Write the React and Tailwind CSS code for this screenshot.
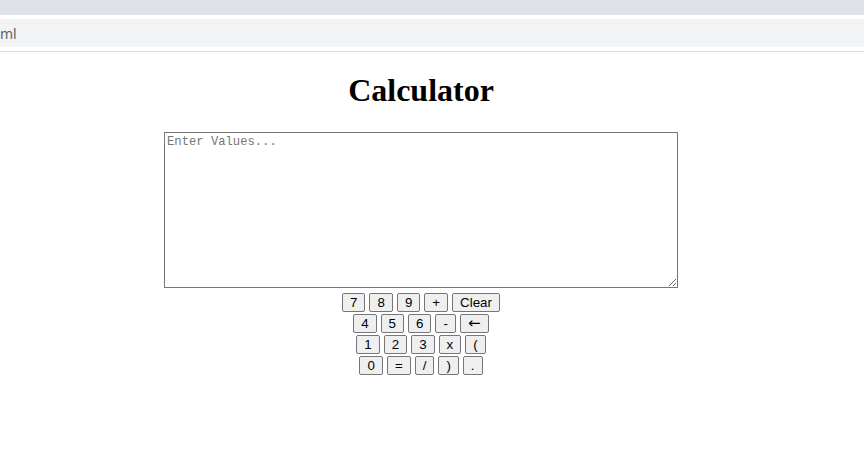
const rows = [
  ['7', '8', '9', '+', 'Clear'],
  ['4', '5', '6', '-', '←'],
  ['1', '2', '3', 'x', '('],
  ['0', '=', '/', ')', '.'],
];

function Key({ label }) {
  const arrow = label === '←';
  return (
    <button
      className={`flex h-[19px] items-center ${arrow ? 'w-[29px] justify-center' : 'px-[7px]'} rounded-[2px] border border-[#767676] bg-[#efefef] font-['Liberation_Sans',Arial,sans-serif] text-[13.33px] leading-none text-black`}
    >
      {arrow ? <span className="font-['DejaVu_Sans',sans-serif] text-[15px] leading-none">←</span> : label}
    </button>
  );
}

export default function App() {
  return (
    <div className="h-[476px] w-[864px] overflow-hidden bg-white">
      <div className="h-[15px] bg-[#dee1e6]" />
      <div className="mt-[4px] flex h-[28px] items-center bg-[#f1f3f4] font-['Noto_Sans',sans-serif] text-[14px] text-[#5f6368]">
        ml
      </div>
      <div className="mt-[4px] h-px bg-[#dadce0]" />

      <main className="flex w-[842px] flex-col items-center">
        <h1 className="mt-[20px] font-['Liberation_Serif','Times_New_Roman',serif] text-[32px] font-bold leading-[37px] text-black">
          Calculator
        </h1>

        <textarea
          placeholder="Enter Values..."
          className="mt-[23px] h-[156px] w-[514px] resize border border-[#767676] p-[2px] font-['Liberation_Mono',monospace] text-[12.2px] leading-[15px] placeholder:text-[#757575]"
        />

        <div className="mt-[5px] flex flex-col items-center gap-[2px]">
          {rows.map((row, i) => (
            <div key={i} className="flex gap-[4px]">
              {row.map((label) => (
                <Key key={label} label={label} />
              ))}
            </div>
          ))}
        </div>
      </main>
    </div>
  );
}
